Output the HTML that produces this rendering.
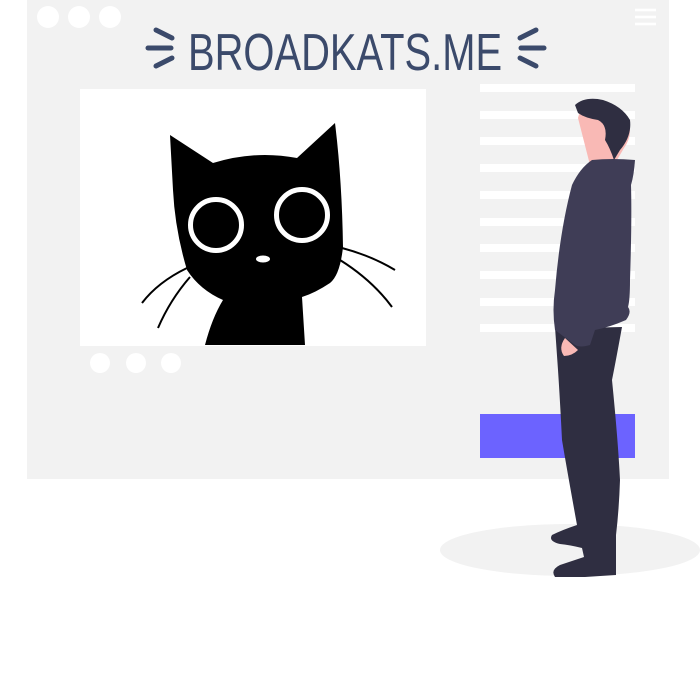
<!DOCTYPE html>
<html><head><style>
html,body{margin:0;padding:0;background:#fff;}
body{width:700px;height:700px;position:relative;overflow:hidden;}
</style></head><body>
<svg width="700" height="700" viewBox="0 0 700 700" style="position:absolute;left:0;top:0">
<rect x="27" y="0" width="642" height="479" fill="#f2f2f2"/>
<circle cx="48" cy="17" r="11" fill="#fff"/>
<circle cx="79" cy="17" r="11" fill="#fff"/>
<circle cx="110" cy="17" r="11" fill="#fff"/>
<g stroke="#fff" stroke-width="2.5"><line x1="635" y1="10" x2="656" y2="10"/><line x1="635" y1="17" x2="656" y2="17"/><line x1="635" y1="24" x2="656" y2="24"/></g>
<g stroke="#3b4a6b" stroke-width="5" stroke-linecap="round" fill="none">
<line x1="156" y1="30" x2="172" y2="38"/><line x1="148" y1="48" x2="171" y2="48"/><line x1="156" y1="66" x2="172" y2="58"/>
<line x1="536" y1="30" x2="520" y2="38"/><line x1="544" y1="48" x2="521" y2="48"/><line x1="536" y1="66" x2="520" y2="58"/>
</g>
<text x="0" y="0" font-family="Liberation Sans Narrow, Liberation Sans, sans-serif" font-size="46" fill="#3b4a6b" transform="translate(188,70) scale(0.9,1.12)" textLength="349" lengthAdjust="spacingAndGlyphs">BROADKATS.ME</text>
<rect x="80" y="89" width="346" height="257" fill="#fff"/>
<path d="M170,135 L213,163 Q255,150 297,158 L335,123 Q342,180 343,247 Q340,275 330,283 Q315,293 302,297 L305,345 L205,345 Q212,318 223,300 Q200,290 187,270 Q175,230 173,190 Z" fill="#000"/>
<circle cx="216" cy="225" r="25.5" fill="none" stroke="#fff" stroke-width="5"/>
<circle cx="302" cy="215" r="25.5" fill="none" stroke="#fff" stroke-width="5"/>
<ellipse cx="263" cy="259" rx="7" ry="3.5" fill="#fff"/>
<g stroke="#000" stroke-width="2" fill="none">
<path d="M187,268 Q158,282 142,303"/><path d="M190,277 Q170,300 158,328"/>
<path d="M342,248 Q372,256 395,270"/><path d="M340,260 Q372,280 392,307"/>
</g>
<circle cx="100" cy="363" r="10" fill="#fff"/>
<circle cx="136" cy="363" r="10" fill="#fff"/>
<circle cx="171" cy="363" r="10" fill="#fff"/>
<g fill="#fff">
<rect x="480" y="84" width="155" height="8"/><rect x="480" y="111" width="155" height="8"/><rect x="480" y="137" width="155" height="8"/><rect x="480" y="164" width="155" height="8"/><rect x="480" y="191" width="155" height="8"/><rect x="480" y="218" width="155" height="8"/><rect x="480" y="244" width="155" height="8"/><rect x="480" y="271" width="155" height="8"/><rect x="480" y="298" width="155" height="8"/><rect x="480" y="324" width="155" height="8"/>
</g>
<rect x="480" y="414" width="155" height="44" fill="#6c63ff"/>
<ellipse cx="570" cy="550" rx="130" ry="26" fill="#f2f2f2"/>
<path d="M578,118 Q580,108 590,104 Q602,104 614,110 Q628,118 630,130 Q630,140 624,148 L617,160 L590,165 Z" fill="#f9b9b5"/>
<path d="M555,327 L580,328 L622,327 Q616,360 612,380 Q618,440 620,480 Q619,510 616,535 L616,575 Q600,576 585,577 L555,577 Q550,570 560,565 Q575,560 584,557 L582,548 Q570,545 560,544 Q548,541 552,535 Q562,530 577,525 Q567,470 562,440 Q560,400 558,370 Z" fill="#2f2e41"/>
<path d="M592,160 Q612,158 635,160 Q634,175 631,185 Q632,220 630,280 Q630,300 628,307 Q632,312 626,320 Q610,327 595,330 L590,345 Q580,348 575,345 L555,330 Q552,310 555,290 Q560,230 572,185 Q580,168 592,160 Z" fill="#3f3d56"/>
<path d="M565,338 Q558,348 564,356 Q572,356 578,350 Z" fill="#f9b9b5"/>
<path d="M575,105 Q585,96 603,100 Q622,106 630,120 Q632,136 620,150 L614,160 Q610,148 605,140 Q608,125 598,120 Q585,118 578,113 Z" fill="#2f2e41"/>
</svg>
</body></html>
